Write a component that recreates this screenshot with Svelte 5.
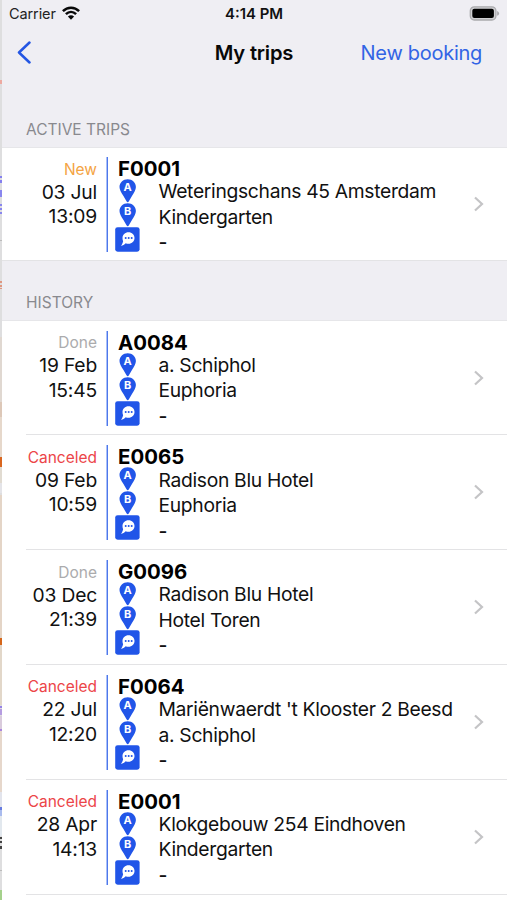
<script>
  const sections = [
    {
      title: 'Active trips',
      trips: [
        { id: 'F0001', status: 'New', date: '03 Jul', time: '13:09', from: 'Weteringschans 45 Amsterdam', to: 'Kindergarten', note: '-' }
      ]
    },
    {
      title: 'History',
      trips: [
        { id: 'A0084', status: 'Done', date: '19 Feb', time: '15:45', from: 'a. Schiphol', to: 'Euphoria', note: '-' },
        { id: 'E0065', status: 'Canceled', date: '09 Feb', time: '10:59', from: 'Radison Blu Hotel', to: 'Euphoria', note: '-' },
        { id: 'G0096', status: 'Done', date: '03 Dec', time: '21:39', from: 'Radison Blu Hotel', to: 'Hotel Toren', note: '-' },
        { id: 'F0064', status: 'Canceled', date: '22 Jul', time: '12:20', from: "Mariënwaerdt 't Klooster 2 Beesd", to: 'a. Schiphol', note: '-' },
        { id: 'E0001', status: 'Canceled', date: '28 Apr', time: '14:13', from: 'Klokgebouw 254 Eindhoven', to: 'Kindergarten', note: '-' }
      ]
    }
  ];

  // Slices of the map that stay visible beside the panel: [top, height, colour]
  const mapMarks = [
    [80, 4, '#eda9a0'], [176, 2, '#8580ef'], [180, 3, '#8580ef'], [190, 7, '#8986ee'],
    [204, 2, '#8986ee'], [208, 2, '#8986ee'], [212, 2, '#8986ee'], [240, 1, '#bbb'],
    [281, 2, '#df9680'], [285, 2, '#df9680'], [288, 1, '#df9680'], [337, 65, '#e0d8d1'],
    [402, 15, '#ddc8b8'], [417, 40, '#e6d8cb'], [457, 10, '#d9661f'], [467, 16, '#e1dbd1'],
    [483, 10, '#e4e4e8'], [495, 143, '#e4d5c7'], [638, 7, '#d5661a'], [645, 60, '#e2d7c9'],
    [706, 2, '#9682e5'], [709, 6, '#b59ce0'], [716, 14, '#d9cbdc'], [729, 2, '#aa86df'],
    [731, 61, '#e6d7cb'], [792, 15, '#e2e4ec'], [807, 3, '#667be0'], [810, 6, '#a9bbee'],
    [816, 20, '#e2e8ee'], [837, 2, '#444'], [841, 2, '#444'], [846, 3, '#444'],
    [870, 1, '#bbb'], [890, 10, '#a5d18c']
  ];
</script>

{#snippet pin(letter)}
  <svg class="pin" width="18" height="24" viewBox="0 0 18 24">
    <path d="M8.700 .2C4.100 .2 .5 3.600 .5 8.100c0 2.800 1.800 5.500 3.800 8.700L7.500 22.300Q8.700 24.200 9.900 22.300l3.200-5.500C15.100 13.600 16.900 10.900 16.900 8.100 16.900 3.600 13.300 .2 8.700 .2Z" fill="#2155e8" />
    <text x="8.700" y="12.300" text-anchor="middle">{letter}</text>
  </svg>
{/snippet}

<div class="screen">
  <div class="map">
    {#each mapMarks as [top, height, color]}
      <i style="top:{top}px;height:{height}px;background:{color}"></i>
    {/each}
  </div>

  <div class="panel">
    <div class="statusbar">
      <div class="carrier">
        <span>Carrier</span>
        <svg width="18" height="14" viewBox="0 0 18 14" fill="none" stroke="#080808" stroke-width="2.500">
          <path d="M.9 5.100C5.500 .5 12.500 .5 17.100 5.100" />
          <path d="M3.900 8.200C6.900 5.300 11.100 5.300 14.100 8.200" />
          <path d="M9 13.700 5.900 10.600Q9 7.900 12.100 10.600Z" fill="#080808" stroke="none" />
        </svg>
      </div>
      <span class="clock">4:14 PM</span>
      <svg class="battery" width="32" height="15" viewBox="0 0 32 15">
        <rect x="2.300" y=".8" width="25.600" height="13.200" rx="4" fill="#d0d0d3" stroke="#aaaaad" stroke-width="1.300" />
        <rect x="4.300" y="2.700" width="21.600" height="9.400" rx="2" fill="#000" />
        <path d="M29.100 5q2 .6 2 2.400t-2 2.400Z" fill="#aaaaad" />
      </svg>
    </div>

    <nav>
      <button class="back" aria-label="Back">
        <svg width="16" height="26" viewBox="0 0 16 26"><path d="M14.500 2.500 4 12.500l10.500 10" fill="none" stroke="#2456e3" stroke-width="2.500" stroke-linecap="round" stroke-linejoin="round" /></svg>
      </button>
      <h1>My trips</h1>
      <button class="booking">New booking</button>
    </nav>

    {#each sections as section}
      <section>
        <h2>{section.title}</h2>
        {#each section.trips as trip}
          <article>
            <div class="when">
              <span class="status {trip.status.toLowerCase()}">{trip.status}</span>
              <span class="date">{trip.date}</span>
              <span class="time">{trip.time}</span>
            </div>
            <div class="rule"></div>
            <div class="details">
              <h3>{trip.id}</h3>
              <div class="route">
                <div class="icons">
                  {@render pin('A')}
                  {@render pin('B')}
                  <svg width="25" height="25" viewBox="0 0 25 25">
                    <rect x=".2" y=".2" width="24.400" height="24.500" rx="2.400" fill="#2155e8" />
                    <path d="M13.500 5.300c3.500 0 6 2.500 6 5.700s-2.500 5.800-6 5.800c-1 0-2-.2-2.800-.6-1.400 1.400-2.900 2.200-4.700 2.900.9-1.700 1.800-3.100 2.100-4.900-.4-.9-.6-2-.6-3.200 0-3.200 2.600-5.700 6-5.700Z" fill="#fff" />
                    <g fill="#2155e8"><circle cx="10.700" cy="11" r="1" /><circle cx="13.700" cy="11" r="1" /><circle cx="16.700" cy="11" r="1" /></g>
                  </svg>
                </div>
                <div class="stops">
                  <span>{trip.from}</span>
                  <span>{trip.to}</span>
                  <span class="note">{trip.note}</span>
                </div>
              </div>
            </div>
            <svg class="chevron" width="12" height="18" viewBox="0 0 12 18"><path d="m2 2.500 7 6.500-7 6.500" fill="none" stroke="#c4c4c6" stroke-width="2.200" /></svg>
          </article>
        {/each}
      </section>
    {/each}
  </div>
</div>

<style>
  :global(body) { margin: 0; }
  .screen {
    display: flex;
    width: 507px;
    height: 900px;
    overflow: hidden;
    background: #fff;
    color: #111;
    font-family: Inter, "Liberation Sans", sans-serif;
  }
  .map { position: relative; flex: 0 0 2px; background: #dededf; }
  .map i { position: absolute; left: 0; width: 2px; }
  .panel { flex: 1; min-width: 0; }
  h1, h2, h3 { margin: 0; }
  button { border: 0; padding: 0; background: none; font: inherit; }
  .statusbar {
    display: grid;
    grid-template-columns: 1fr auto 1fr;
    align-items: center;
    height: 27px;
    padding: 0 7px;
    background: #efeef3;
  }
  .carrier { display: flex; gap: 6px; font-size: 14.500px; letter-spacing: -.1px; color: #222; }
  .carrier svg { margin-top: 1px; }
  .clock { margin-left: -1px; font-size: 14.900px; font-weight: 600; color: #111; }
  .battery { justify-self: end; }
  nav {
    display: grid;
    grid-template-columns: 1fr auto 1fr;
    align-items: center;
    height: 51px;
    padding: 0 25px 0 25px;
    background: #efeef3;
  }
  .back { justify-self: start; height: 26px; margin-left: -12px; }
  h1 { margin-left: -1px; font-size: 20.200px; font-weight: 600; letter-spacing: -.2px; color: #080808; }
  .booking { justify-self: end; font-size: 20px; letter-spacing: -.28px; color: #3264e5; }
  section h2 {
    box-sizing: border-box;
    height: 60px;
    padding: 30px 0 0 24px;
    border-bottom: 1px solid #e6e6e9;
    background: #efeef3;
    font-size: 15.500px;
    line-height: 24px;
    font-weight: 400;
    text-transform: uppercase;
    color: #89898e;
  }
  section:first-of-type h2 { height: 70px; padding-top: 40px; }
  article {
    display: flex;
    position: relative;
    box-sizing: border-box;
    height: 114.800px;
    padding-top: 9.500px;
  }
  article::after {
    content: "";
    position: absolute;
    left: 24px;
    right: 0;
    bottom: .4px;
    height: 1px;
    background: #e3e3e5;
  }
  section:first-of-type article { height: 113px; padding-top: 9px; }
  section:first-of-type article::after { left: 0; }
  .when {
    display: flex;
    flex-direction: column;
    align-items: flex-end;
    width: 95px;
    padding-top: .6px;
    font-size: 19.300px;
    letter-spacing: -.2px;
    line-height: 24.500px;
  }
  .status { font-size: 15.500px; line-height: 24px; letter-spacing: 0; }
  .date { margin-top: -2px; }
  .new { color: #f4a443; }
  .done { color: #ababad; }
  .canceled { color: #ec4548; }
  .rule { width: 2px; height: 95px; margin-left: 9px; background: linear-gradient(90deg, #a9bff7 50%, #4e78eb 50%); }
  .details { flex: 1; min-width: 0; }
  h3 { margin-left: 10px; font-size: 20.400px; line-height: 24.500px; height: 22px; color: #000; }
  .route { display: flex; margin-left: 7px; }
  .icons { display: flex; flex-direction: column; align-items: center; width: 25px; }
  .icons svg { display: block; }
  .pin text { font: 700 11px Inter, sans-serif; fill: #fff; }
  .stops { display: flex; flex-direction: column; margin-left: 18.500px; padding-top: .3px; font-size: 19.300px; letter-spacing: -.32px; line-height: 25.500px; white-space: nowrap; }
  .note { font-weight: 500; }
  .chevron { align-self: flex-start; margin: 38.200px 22.500px 0 0; }
</style>
